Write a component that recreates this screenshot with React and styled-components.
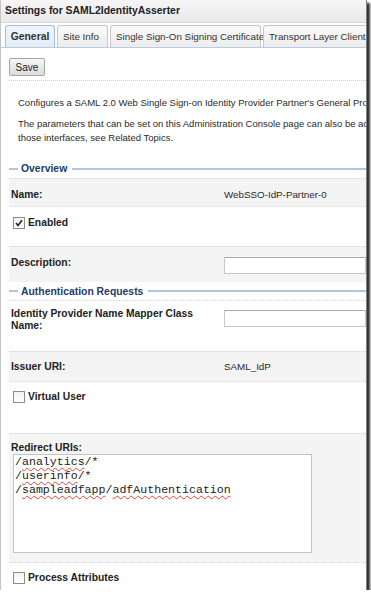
import React from 'react';
import styled, { createGlobalStyle } from 'styled-components';

const GlobalStyle = createGlobalStyle`
  html, body {
    margin: 0;
    background: #fff;
  }
  body {
    font-family: "Liberation Sans", Arial, sans-serif;
    font-size: 9.5px;
    color: #222;
  }
`;

const Frame = styled.div`
  width: 367px;
  height: 590px;
  box-sizing: border-box;
  border-left: 1px solid #c4c4c4;
  border-right: 1px solid #808080;
  box-shadow: 3px 3px 2px rgba(0, 0, 0, 0.8);
  background: #fff;
  overflow: hidden;
  display: flex;
  flex-direction: column;
`;

const TitleBar = styled.div`
  height: 22px;
  line-height: 22px;
  padding-left: 4px;
  font-size: 10.4px;
  font-weight: bold;
  color: #222;
  background: linear-gradient(#f5f5f5, #eaeaea);
  border-bottom: 1px solid #d6d6d6;
  white-space: nowrap;
`;

const TabBar = styled.div`
  display: flex;
  align-items: flex-end;
  gap: 2px;
  padding: 2px 0 0 4px;
  border-bottom: 1px solid #b9cbe2;
  white-space: nowrap;
`;

const Tab = styled.div`
  flex: none;
  height: 22px;
  line-height: 22px;
  box-sizing: border-box;
  width: ${p => p.$w}px;
  padding-left: ${p => (p.$active ? 0 : 5)}px;
  text-align: ${p => (p.$active ? 'center' : 'left')};
  border: 1px solid ${p => (p.$active ? '#a6bddb' : '#c6c6c6')};
  border-bottom: none;
  border-radius: 3px 3px 0 0;
  background: ${p => (p.$active ? 'linear-gradient(#f0f5fb, #e3ecf7)' : 'linear-gradient(#fafafa, #ececec)')};
  font-size: ${p => (p.$active ? 10.4 : 9.8)}px;
  font-weight: ${p => (p.$active ? 'bold' : 'normal')};
  color: #333;
`;

const Body = styled.div`
  padding-left: 8px;
  flex: 1;
`;

const Toolbar = styled.div`
  padding: 10px 0 4px;
  border-bottom: 1px dotted #d0d0d0;
`;

const Button = styled.button`
  display: block;
  width: 36px;
  height: 18px;
  padding: 0;
  font-family: inherit;
  font-size: 10px;
  color: #222;
  background: linear-gradient(#f7f7f7, #dcdcdc);
  border: 1px solid #a4a4a4;
  border-radius: 2px;
`;

const Intro = styled.div`
  padding: 15px 0 0 9px;
  color: #2a2a2a;
  white-space: nowrap;

  p {
    margin: 0 0 7px;
    line-height: 14px;
  }
`;

const SectionHeader = styled.div`
  display: flex;
  align-items: center;
  height: ${p => p.$h}px;
  margin-top: ${p => p.$top || 0}px;
  font-size: 10.4px;
  font-weight: bold;
  color: #233c6b;
  white-space: nowrap;

  &::before,
  &::after {
    content: '';
    height: 2px;
    background: #b3c6df;
  }
  &::before {
    width: 9px;
    margin-right: 3px;
  }
  &::after {
    flex: 1;
    margin-left: 5px;
  }
`;

const Row = styled.div`
  display: grid;
  grid-template-columns: 213px 1fr;
  align-items: start;
  height: ${p => p.$h}px;
  padding: ${p => p.$pt}px 0 0 2px;
  box-sizing: border-box;
  border-top: 1px dotted #d4d4d4;
  background: ${p => (p.$shade ? '#f4f4f4' : '#fff')};
`;

const Label = styled.div`
  font-size: 10.3px;
  font-weight: bold;
  line-height: ${p => p.$lh || 14}px;
  color: #222;
`;

const Value = styled.div`
  line-height: 14px;
  font-size: 9.8px;
  color: #2a2a2a;
  white-space: nowrap;
`;

const TextInput = styled.div`
  height: 17px;
  margin-top: ${p => p.$top || 0}px;
  box-sizing: border-box;
  border: 1px solid #c8c8c8;
  border-top-color: #a8a8a8;
  background: #fff;
`;

const CheckRow = styled.div`
  display: flex;
  align-items: flex-start;
  gap: 3px;
  height: ${p => p.$h}px;
  padding: ${p => p.$pt}px 0 0 4px;
  box-sizing: border-box;
  border-top: 1px dotted #d4d4d4;
`;

const Box = styled.span`
  width: 12px;
  height: 12px;
  margin-top: 1px;
  box-sizing: border-box;
  border: 1px solid #8c8c8c;
  background: linear-gradient(#f2f2f2, #fff);
  display: flex;
  align-items: center;
  justify-content: center;
`;

const BlockRow = styled.div`
  height: ${p => p.$h}px;
  padding: ${p => p.$pt}px 0 0 2px;
  box-sizing: border-box;
  border-top: 1px dotted #d4d4d4;
  background: #f4f4f4;
`;

const TextArea = styled.div`
  width: 299px;
  height: 99px;
  margin-left: 2px;
  padding: 0 0 0 1px;
  box-sizing: border-box;
  border: 1px solid #c4c4c4;
  background: #fff;
  font-family: "Liberation Mono", "Courier New", monospace;
  font-size: 11.6px;
  line-height: 14px;
  color: #222;
  white-space: pre;
`;

const Misspelled = styled.span`
  text-decoration: underline wavy #e0403a;
  text-decoration-thickness: 1px;
  text-underline-offset: 2px;
  text-decoration-skip-ink: none;
`;

function Checkbox({ checked }) {
  return (
    <Box>
      {checked && (
        <svg width="8" height="8" viewBox="0 0 8 8">
          <path d="M1 4 L3 6.5 L7 1.2" fill="none" stroke="#222" strokeWidth="1.6" />
        </svg>
      )}
    </Box>
  );
}

export default function App() {
  return (
    <>
      <GlobalStyle />
      <Frame>
        <TitleBar>Settings for SAML2IdentityAsserter</TitleBar>
        <TabBar>
          <Tab $active $w={50}>General</Tab>
          <Tab $w={51}>Site Info</Tab>
          <Tab $w={151}>Single Sign-On Signing Certificate</Tab>
          <Tab $w={110}>Transport Layer Client</Tab>
        </TabBar>
        <Body>
          <Toolbar>
            <Button>Save</Button>
          </Toolbar>
          <Intro>
            <p>Configures a SAML 2.0 Web Single Sign-on Identity Provider Partner's General Properties.</p>
            <p>
              The parameters that can be set on this Administration Console page can also be accessed
              <br />
              those interfaces, see Related Topics.
            </p>
          </Intro>

          <SectionHeader $h={19} $top={14}>Overview</SectionHeader>
          <Row $shade $h={28} $pt={9}>
            <Label>Name:</Label>
            <Value>WebSSO-IdP-Partner-0</Value>
          </Row>
          <CheckRow $h={40} $pt={9}>
            <Checkbox checked />
            <Label>Enabled</Label>
          </CheckRow>
          <Row $shade $h={36} $pt={9}>
            <Label>Description:</Label>
            <TextInput $top={1} />
          </Row>

          <SectionHeader $h={18}>Authentication Requests</SectionHeader>
          <Row $h={51} $pt={7}>
            <Label $lh={12}>
              Identity Provider Name Mapper Class
              <br />
              Name:
            </Label>
            <TextInput $top={2} />
          </Row>
          <Row $shade $h={30} $pt={8}>
            <Label>Issuer URI:</Label>
            <Value>SAML_IdP</Value>
          </Row>
          <CheckRow $h={52} $pt={8}>
            <Checkbox />
            <Label>Virtual User</Label>
          </CheckRow>
          <BlockRow $h={129} $pt={8}>
            <Label $lh={12}>Redirect URIs:</Label>
            <TextArea>
              /<Misspelled>analytics</Misspelled>/*{'\n'}
              /<Misspelled>userinfo</Misspelled>/*{'\n'}
              /<Misspelled>sampleadfapp</Misspelled>/<Misspelled>adfAuthentication</Misspelled>
            </TextArea>
          </BlockRow>
          <CheckRow $h={28} $pt={8}>
            <Checkbox />
            <Label>Process Attributes</Label>
          </CheckRow>
        </Body>
      </Frame>
    </>
  );
}
